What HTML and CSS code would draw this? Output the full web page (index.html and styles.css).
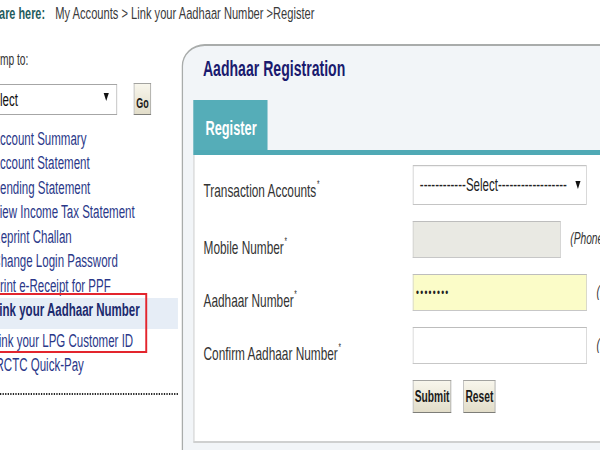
FILE: index.html
```html
<!DOCTYPE html>
<html lang="en">
<head>
<meta charset="utf-8">
<title>Aadhaar Registration</title>
<link rel="stylesheet" href="styles.css">
</head>
<body>
<div class="page">
  <div class="crumbs"><b class="here">You are here:</b><span class="trail">My Accounts &gt; Link your Aadhaar Number &gt;Register</span></div>
  <div class="layout">
    <aside class="sidebar">
      <div class="jump-label">Jump to:</div>
      <div class="jump-row">
        <div class="side-select"><span>Select</span><i class="caret"></i></div>
        <button class="btn go" type="button">Go</button>
      </div>
      <nav class="menu">
        <a class="item">Account Summary</a>
        <a class="item">Account Statement</a>
        <a class="item">Pending Statement</a>
        <a class="item">View Income Tax Statement</a>
        <a class="item">Reprint Challan</a>
        <a class="item">Change Login Password</a>
        <a class="item">Print e-Receipt for PPF</a>
        <div class="flagged">
          <a class="item active">Link your Aadhaar Number</a>
          <a class="item">Link your LPG Customer ID</a>
        </div>
        <a class="item">IRCTC Quick-Pay</a>
      </nav>
      <div class="divider"></div>
    </aside>
    <main class="panel">
      <h1 class="title">Aadhaar Registration</h1>
      <div class="card">
        <div class="tabs"><span class="tab">Register</span></div>
        <form class="form">
          <div class="row first">
            <label class="label">Transaction Accounts<sup class="req">*</sup></label>
            <div class="select"><span>------------Select------------------</span><i class="caret"></i></div>
          </div>
          <div class="row">
            <label class="label">Mobile Number<sup class="req">*</sup></label>
            <div class="input short disabled"></div>
            <span class="note">(Phone Number)</span>
          </div>
          <div class="row">
            <label class="label">Aadhaar Number<sup class="req">*</sup></label>
            <div class="input filled"><span class="dots">&#8226;&#8226;&#8226;&#8226;&#8226;&#8226;&#8226;&#8226;</span></div>
            <span class="note">(12 digits)</span>
          </div>
          <div class="row">
            <label class="label">Confirm Aadhaar Number<sup class="req">*</sup></label>
            <div class="input"></div>
            <span class="note">(12 digits)</span>
          </div>
          <div class="actions">
            <button class="btn submit" type="button">Submit</button>
            <button class="btn reset" type="button">Reset</button>
          </div>
        </form>
      </div>
    </main>
  </div>
</div>
</body>
</html>
```
FILE: styles.css
```css
html, body {
  margin: 0;
  padding: 0;
  background: #ffffff;
  overflow: hidden;
  height: 450px;
}

.page {
  width: 938px;
  transform: scaleX(0.64);
  transform-origin: 0 0;
  font-family: "Liberation Sans", Arial, sans-serif;
  color: #333333;
}

/* breadcrumb */
.crumbs {
  margin-left: -37px;
  padding-top: 4px;
  height: 18px;
  line-height: 18px;
  font-size: 17px;
  white-space: nowrap;
  margin-bottom: 22px;
}
.here {
  color: #1f5c5e;
  font-weight: bold;
}
.trail {
  color: #3a3a3a;
  margin-left: 16px;
  font-size: 17.4px;
}

.layout {
  display: flex;
  align-items: flex-start;
}

/* sidebar */
.sidebar {
  flex: none;
  width: 278px;
}
.jump-label {
  margin-left: -17px;
  padding-top: 5.5px;
  font-size: 16px;
  line-height: 20px;
  color: #333333;
}
.jump-row {
  margin-top: 14.5px;
  display: flex;
  align-items: flex-start;
  gap: 26px;
}
.side-select {
  box-sizing: border-box;
  margin-left: -40px;
  width: 223px;
  height: 31px;
  border: 1px solid #a6a6a6;
  background: #ffffff;
  display: flex;
  align-items: center;
  justify-content: space-between;
  padding: 0 12px 0 17px;
  font-size: 18px;
  line-height: 20px;
  color: #111111;
}
.caret {
  display: block;
  width: 0;
  height: 0;
  border-left: 4.5px solid transparent;
  border-right: 4.5px solid transparent;
  border-top: 8px solid #111111;
}
.side-select .caret {
  margin-bottom: 5px;
}

.btn {
  box-sizing: border-box;
  font-family: "Liberation Sans", Arial, sans-serif;
  font-weight: bold;
  color: #1a1a1a;
  background: linear-gradient(#f8f6ec, #e2ddc9);
  border: 1px solid #a3a3a0;
  border-bottom-color: #7d7d78;
  border-right-color: #8a8a86;
  border-radius: 0;
  margin: 0;
  cursor: pointer;
}
.go {
  margin-top: -1px;
  height: 32px;
  padding: 8px 3px 0;
  font-size: 14px;
  line-height: 16px;
  align-self: flex-start;
}

.menu {
  margin-top: 11.5px;
}
.item {
  display: block;
  margin-left: -12px;
  font-size: 18px;
  line-height: 24.5px;
  color: #2a3889;
  white-space: nowrap;
}
.item.active {
  font-weight: bold;
  color: #1c2a6e;
  background: #e6edf6;
  padding-bottom: 6px;
}
.flagged {
  position: relative;
}
.flagged::after {
  content: "";
  position: absolute;
  top: -5px;
  bottom: 0;
  left: -40px;
  right: 48px;
  border: 2px solid #e3252d;
  border-left-width: 3px;
  border-right-width: 3px;
}
.divider {
  margin-top: 15px;
  margin-left: -12px;
  border-top: 2px dotted #222222;
}

/* main panel */
.panel {
  flex: 1;
  margin-left: 6px;
  margin-right: -40px;
  border: 2px solid #a9acab;
  border-top-left-radius: 36px 22px;
  background: #f2f5f8;
  padding: 10.4px 0 40px;
}
.title {
  margin: 0;
  padding-left: 31px;
  font-size: 22px;
  line-height: 26px;
  font-weight: bold;
  color: #1a1a6e;
}
.card {
  margin-top: 17.6px;
  margin-left: 16px;
}
.tabs {
  display: flex;
  border-bottom: 5px solid #4fa9b5;
}
.tab {
  box-sizing: border-box;
  height: 50px;
  padding: 6px 17px 0 19px;
  line-height: 44px;
  font-size: 20px;
  font-weight: bold;
  color: #ffffff;
  background: #55adb8;
}
.form {
  background: #ffffff;
  border-left: 2px solid #d4d6d6;
  border-bottom: 2px solid #cfd0d0;
  padding: 10px 0 28px 14px;
  display: flex;
  flex-direction: column;
  gap: 16px;
}
.row {
  display: flex;
  align-items: flex-end;
  white-space: nowrap;
}
.label {
  flex: none;
  width: 327px;
  font-size: 18.5px;
  line-height: 20px;
  color: #333333;
}
.row.first .label {
  padding-bottom: 4px;
}
.req {
  font-size: 10px;
  line-height: 0;
  vertical-align: 9px;
  margin-left: 1px;
}
.select {
  box-sizing: border-box;
  width: 272px;
  height: 40px;
  border: 1px solid #c4c4c4;
  box-shadow: inset 0 1px 1px rgba(0, 0, 0, 0.06);
  background: #ffffff;
  display: flex;
  align-items: center;
  justify-content: space-between;
  padding: 0 9px 0 10px;
  font-size: 18px;
  line-height: 20px;
  color: #222222;
}
.input {
  box-sizing: border-box;
  flex: none;
  width: 272px;
  height: 37px;
  border: 1px solid #c7c7c7;
  border-top-color: #bdbdbd;
  background: #ffffff;
  display: flex;
  align-items: center;
  padding-left: 4px;
}
.input.short {
  width: 231px;
}
.input.disabled {
  background: #e9e9e3;
}
.input.filled {
  background: #fbfcc8;
}
.dots {
  font-size: 13px;
  letter-spacing: 2px;
  color: #222222;
}
.note {
  align-self: center;
  margin-left: 15px;
  font-size: 16px;
  font-style: italic;
  color: #333333;
}
.actions {
  display: flex;
  gap: 19px;
  margin-left: 327px;
}
.submit,
.reset {
  height: 33px;
  padding: 0 2px;
  font-size: 16px;
  line-height: 31px;
}
```
